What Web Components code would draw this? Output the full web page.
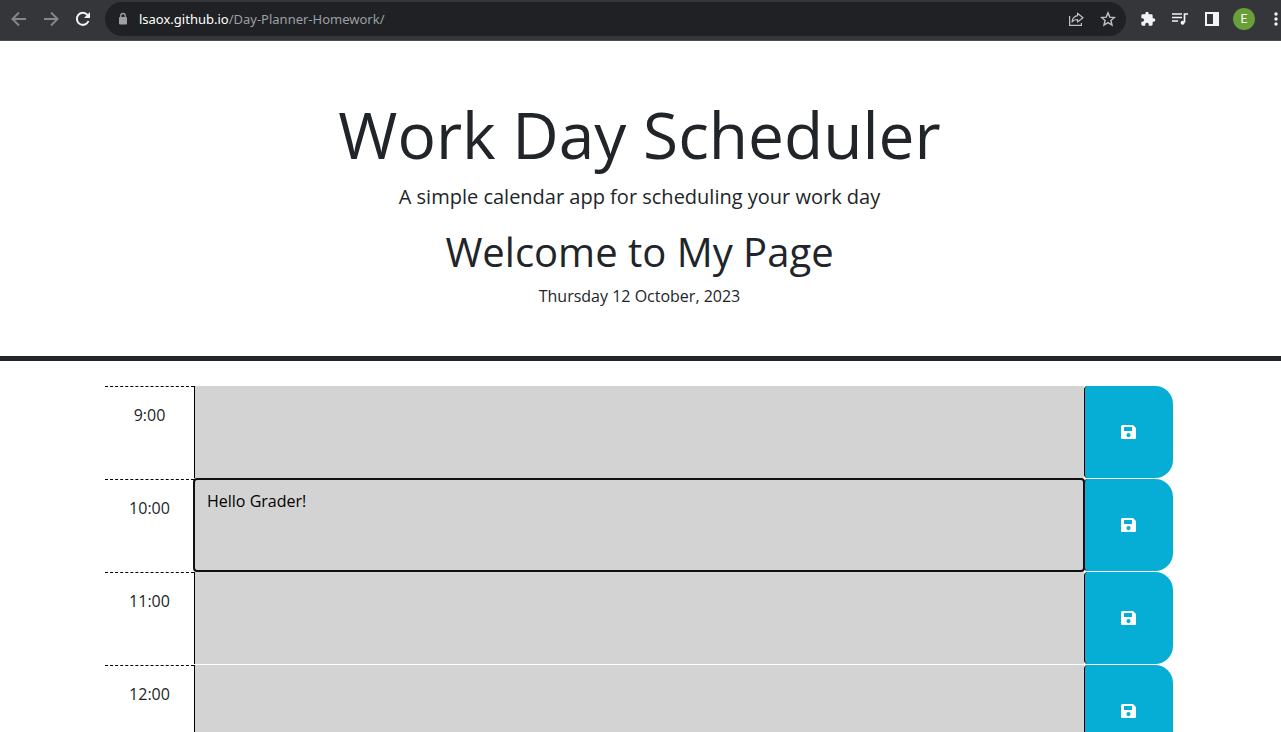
<!DOCTYPE html>
<html lang="en">
<head>
<meta charset="utf-8">
<title>Work Day Scheduler</title>
<style>
  html, body { margin: 0; height: 100%; }
  body { font-family: "Open Sans", "Noto Sans", sans-serif; font-size: 16px; line-height: 24px; color: #212529; background: #fff; }
</style>
</head>
<body>
<planner-window>
  <browser-bar slot="bar" host="lsaox.github.io" path="/Day-Planner-Homework/"></browser-bar>
  <page-header>
    <span slot="title">Work Day Scheduler</span>
    <span slot="lead">A simple calendar app for scheduling your work day</span>
    <span slot="welcome">Welcome to My Page</span>
    <span slot="date">Thursday 12 October, 2023</span>
  </page-header>
  <day-schedule>
    <time-block time="9:00"></time-block>
    <time-block time="10:00" active>Hello Grader!</time-block>
    <time-block time="11:00"></time-block>
    <time-block time="12:00"></time-block>
  </day-schedule>
</planner-window>

<template id="window-template">
  <style>
    :host { display: flex; flex-direction: column; height: 100vh; overflow: hidden; }
    main { flex: 1; min-height: 0; overflow: hidden; }
  </style>
  <slot name="bar"></slot>
  <main><slot></slot></main>
</template>

<template id="bar-template">
  <style>
    :host { display: block; flex: none; background: #35363a; border-bottom: 1px solid #4b4c4f; overflow: hidden; }
    nav { display: flex; align-items: center; height: 40px; padding: 0 0 2px 3px; box-sizing: border-box; }
    button { display: grid; place-items: center; flex: none; width: 32px; height: 32px; padding: 0; border: 0; background: none; color: #f1f3f4; }
    button:disabled { color: #85868a; }
    svg { display: block; width: 16px; height: 16px; }
    form { display: flex; align-items: center; flex: 1; min-width: 0; height: 34px; margin: 0 6px; padding: 0 2px 0 10px; border-radius: 17px; background: #202124; box-sizing: border-box; color: #9aa0a6; }
    form button { color: #bdc1c6; }
    .lock { width: 16px; height: 16px; flex: none; }
    a { flex: 1; min-width: 0; margin-left: 8px; font: 13px/20px "Noto Sans", "Open Sans", sans-serif; color: #9aa0a6; text-decoration: none; white-space: nowrap; }
    b { font-weight: 400; color: #fff; }
    .avatar { width: 22px; height: 22px; margin: 0 5px; border-radius: 50%; background: #689f38; color: #fff; font: 12px/22px Roboto, sans-serif; }
    .more { margin-right: -11px; }
  </style>
  <nav aria-label="Browser">
    <button disabled aria-label="Back"><svg viewBox="0 0 16 16" fill="none" stroke="currentColor" stroke-width="2"><path d="M15 8H2M8 1.500 1.500 8 8 14.500"/></svg></button>
    <button disabled aria-label="Forward"><svg viewBox="0 0 16 16" fill="none" stroke="currentColor" stroke-width="2"><path d="M1 8h13M8 1.500 14.500 8 8 14.500"/></svg></button>
    <button aria-label="Reload"><svg viewBox="0 0 16 16" fill="none" stroke="currentColor" stroke-width="2"><path d="M13.500 10A6 6 0 1 1 12.500 4"/><path d="M15 1v6H9z" fill="currentColor" stroke="none"/></svg></button>
    <form>
      <svg class="lock" viewBox="0 0 16 16"><rect x="4" y="6" width="8" height="7.500" rx="1" fill="currentColor"/><path d="M5.700 7V4.800a2.300 2.300 0 0 1 4.600 0V7" fill="none" stroke="currentColor" stroke-width="1.300"/></svg>
      <a href="#"><b></b><span></span></a>
      <button type="button" aria-label="Share"><svg viewBox="0 0 16 16" fill="none" stroke="currentColor" stroke-width="1.200"><path d="M1.600 5v9.400h11.800V12"/><path d="M9.500 2.200 15 6.700 9.500 11V8.500C7 8.500 5.200 9.300 4 11c.3-3.200 2.200-5.700 5.500-6.300z" stroke-linejoin="round"/></svg></button>
      <button type="button" aria-label="Bookmark"><svg viewBox="0 0 16 16" fill="none" stroke="currentColor" stroke-width="1.400"><path d="m8 1.900 1.800 4.200 4.600.4-3.500 3 1.100 4.500-4-2.400L4 14l1.100-4.500-3.500-3 4.600-.4z"/></svg></button>
    </form>
    <button aria-label="Extensions"><svg viewBox="0 0 24 24" fill="currentColor"><path d="M20.500 11H19V7a2 2 0 0 0-2-2h-4V3.500a2.500 2.500 0 0 0-5 0V5H4a2 2 0 0 0-2 2v3.800h1.500a2.700 2.700 0 0 1 0 5.400H2V20a2 2 0 0 0 2 2h3.800v-1.500a2.700 2.700 0 0 1 5.400 0V22H17a2 2 0 0 0 2-2v-4h1.500a2.500 2.500 0 0 0 0-5z"/></svg></button>
    <button aria-label="Media"><svg viewBox="0 0 16 16" fill="none" stroke="currentColor" stroke-width="1.700"><path d="M0 3h10M0 6.500h10M0 10h6M16 3h-3.500v8.500"/><circle cx="10.600" cy="11.800" r="2" fill="currentColor" stroke="none"/></svg></button>
    <button aria-label="Side panel"><svg viewBox="0 0 16 16"><path fill="currentColor" fill-rule="evenodd" d="M1 1h14v14H1zM3 3v10h6V3z"/></svg></button>
    <button class="avatar" aria-label="Profile">E</button>
    <button class="more" aria-label="Menu"><svg viewBox="0 0 16 16" fill="currentColor"><circle cx="8" cy="3" r="1.700"/><circle cx="8" cy="8" r="1.700"/><circle cx="8" cy="13" r="1.700"/></svg></button>
  </nav>
</template>

<template id="header-template">
  <style>
    :host { display: block; padding: 54px 2px 32px 0; border-bottom: 5px solid #212529; text-align: center; }
    h1, h2, p { margin: 0; font-weight: 400; }
    h1 { font-size: 64px; line-height: 80px; margin-bottom: 7px; }
    .lead { font-size: 20px; line-height: 30px; margin-bottom: 16px; }
    h2 { font-size: 40px; line-height: 48px; margin-bottom: 8px; }
    .date { margin-bottom: 16px; }
  </style>
  <header>
    <h1><slot name="title"></slot></h1>
    <p class="lead"><slot name="lead"></slot></p>
    <h2><slot name="welcome"></slot></h2>
    <p class="date"><slot name="date"></slot></p>
  </header>
</template>

<template id="schedule-template">
  <style>
    :host { display: flex; flex-direction: column; gap: 1px; max-width: 1068px; margin: 0 auto; padding: 25px 3px 24px 0; }
  </style>
  <slot></slot>
</template>

<template id="block-template">
  <style>
    :host { display: grid; grid-template-columns: 1fr 10fr 1fr; height: 92px; }
    label { padding-top: 16px; border-top: 1px dashed #000; text-align: center; }
    textarea { display: block; width: 100%; min-width: 0; height: 100%; margin: 0; padding: 10px 12px; border: 0; border-left: 1px solid #000; background: #d3d3d3; box-sizing: border-box; resize: none; overflow: hidden; outline: 0; font: inherit; color: #000; }
    :host([active]) textarea { position: relative; border-radius: 3px; outline: 2px solid #101010; outline-offset: -1px; }
    button { display: grid; place-items: center; padding: 0; border: 0; border-left: 1px solid #000; border-radius: 4px 18px 18px 4px; background: #06aed5; color: #fff; }
    svg { width: 16px; height: 16px; display: block; }
  </style>
  <label for="note"></label>
  <textarea id="note"></textarea>
  <button aria-label="Save"><svg viewBox="0 0 16 16"><path fill="currentColor" fill-rule="evenodd" d="M1.500 1H12l3 3v10a1 1 0 0 1-1 1H1a1 1 0 0 1-1-1V2.500A1.500 1.500 0 0 1 1.500 1zM3 3v4h8V3zM7.500 9a2.100 2.100 0 1 0 0 4.200A2.100 2.100 0 0 0 7.500 9z"/></svg></button>
</template>

<script>
  class TemplateElement extends HTMLElement {
    constructor() {
      super();
      this.attachShadow({ mode: "open" })
        .append(document.getElementById(this.constructor.template).content.cloneNode(true));
    }
  }
  class PlannerWindow extends TemplateElement { static template = "window-template"; }
  class PageHeader extends TemplateElement { static template = "header-template"; }
  class DaySchedule extends TemplateElement { static template = "schedule-template"; }
  class BrowserBar extends TemplateElement {
    static template = "bar-template";
    connectedCallback() {
      this.shadowRoot.querySelector("b").textContent = this.getAttribute("host");
      this.shadowRoot.querySelector("a span").textContent = this.getAttribute("path");
    }
  }
  class TimeBlock extends TemplateElement {
    static template = "block-template";
    connectedCallback() {
      this.shadowRoot.querySelector("label").textContent = this.getAttribute("time");
      this.shadowRoot.querySelector("textarea").value = this.textContent.trim();
    }
  }
  customElements.define("planner-window", PlannerWindow);
  customElements.define("browser-bar", BrowserBar);
  customElements.define("page-header", PageHeader);
  customElements.define("day-schedule", DaySchedule);
  customElements.define("time-block", TimeBlock);
</script>
</body>
</html>
